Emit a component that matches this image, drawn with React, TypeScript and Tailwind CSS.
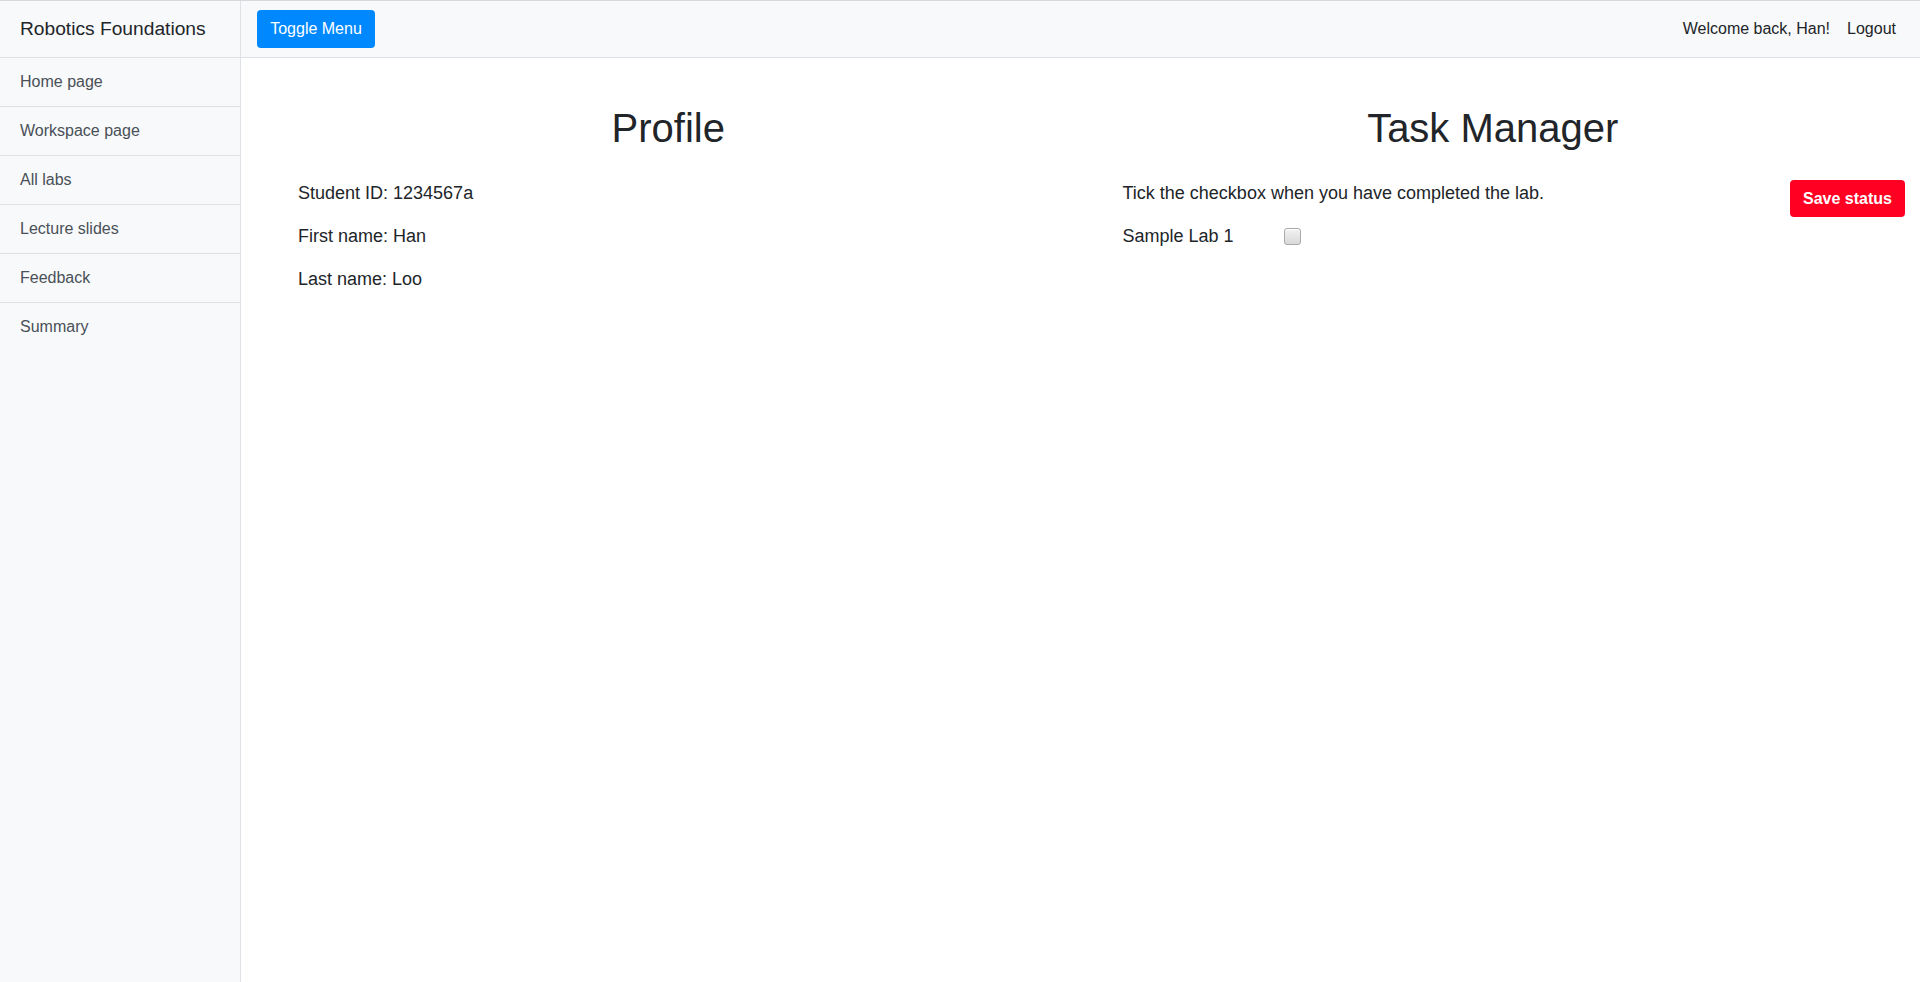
import React from 'react'

const menu = ['Home page', 'Workspace page', 'All labs', 'Lecture slides', 'Feedback', 'Summary']

export default function App() {
  return (
    <div className="flex h-[982px] w-full border-t border-[#d6d8db] font-['Liberation_Sans',Arial,sans-serif] text-[#212529] text-[16px]">
      {/* Sidebar */}
      <div className="w-[241px] shrink-0 bg-[#f8f9fa] border-r border-[#dee2e6]">
        <div className="h-[57px] px-5 flex items-center text-[19.2px] border-b border-[#dee2e6]">Robotics Foundations</div>
        <div className="flex flex-col">
          {menu.map((item, i) => (
            <div
              key={item}
              className={`px-5 py-3 leading-6 text-[#495057] ${i < menu.length - 1 ? 'border-b border-[#dee2e6]' : ''}`}
            >
              {item}
            </div>
          ))}
        </div>
      </div>

      {/* Main */}
      <div className="flex-1 flex flex-col bg-white">
        <div className="h-[57px] shrink-0 bg-[#f8f9fa] border-b border-[#dee2e6] flex items-center justify-between pl-4 pr-6">
          <button className="h-[38px] w-[118px] rounded-[4px] bg-[#0088fe] text-white text-[16px]">Toggle Menu</button>
          <div className="flex items-center gap-[17px]">
            <span>Welcome back, Han!</span>
            <span>Logout</span>
          </div>
        </div>

        <div className="flex px-[15px] pt-[46px]">
          {/* Profile */}
          <div className="w-1/2">
            <h1 className="text-center text-[40px] leading-[48px] mb-[28px]">Profile</h1>
            <div className="pl-[42px] text-[18px] leading-[27px]">
              <p className="mb-4">Student ID: 1234567a</p>
              <p className="mb-4">First name: Han</p>
              <p className="mb-4">Last name: Loo</p>
            </div>
          </div>

          {/* Task Manager */}
          <div className="w-1/2">
            <h1 className="text-center text-[40px] leading-[48px] mb-[28px]">Task Manager</h1>
            <div className="flex justify-between items-start">
              <div className="pl-[42px] text-[18px] leading-[27px]">
                <p className="mb-4">Tick the checkbox when you have completed the lab.</p>
                <div className="flex items-center">
                  <span className="w-[161px]">Sample Lab 1</span>
                  <span className="w-[17px] h-[17px] rounded-[3px] border border-[#a9a9a9] bg-gradient-to-b from-[#f2f2f2] to-[#d9d9d9] shadow-[inset_0_1px_0_#ffffff]" />
                </div>
              </div>
              <button className="h-[37px] w-[115px] rounded-[4px] bg-[#ff0022] text-white font-bold text-[16px]">Save status</button>
            </div>
          </div>
        </div>
      </div>
    </div>
  )
}
